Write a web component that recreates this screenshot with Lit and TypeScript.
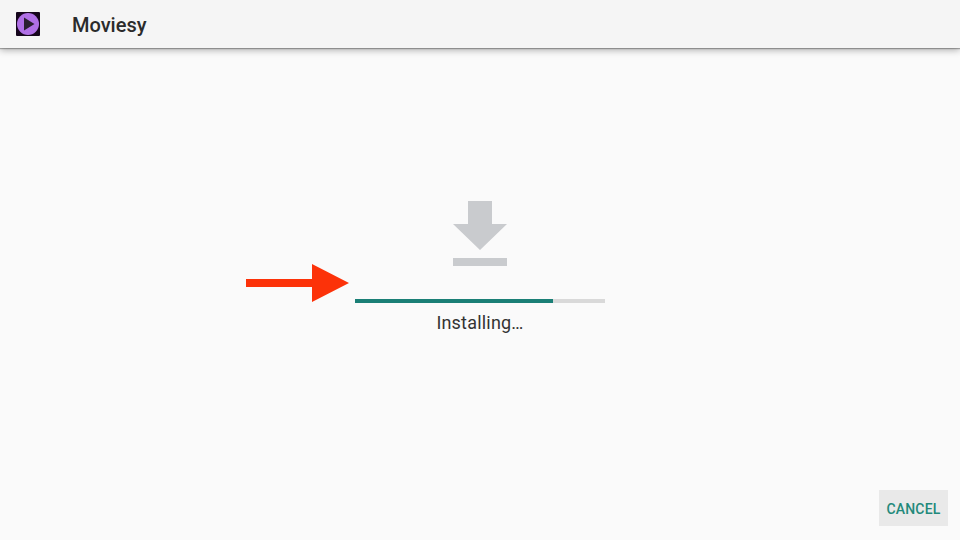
import { LitElement, html, css } from "lit";
import { customElement } from "lit/decorators.js";

@customElement("app-root")
export class AppRoot extends LitElement {
  static styles = css`
    :host {
      display: flex;
      flex-direction: column;
      width: 960px;
      height: 540px;
      background: #fafafa;
      font-family: Roboto, "Liberation Sans", sans-serif;
      overflow: hidden;
    }
    .bar {
      flex: none;
      height: 48px;
      display: flex;
      align-items: center;
      gap: 32px;
      padding-left: 16px;
      background: #f5f5f5;
      box-shadow: 0 1px 1px rgba(0, 0, 0, 0.28), 0 2px 7px rgba(0, 0, 0, 0.32);
      position: relative;
      z-index: 1;
    }
    .logo {
      display: block;
      width: 24px;
      height: 24px;
    }
    .title {
      font-size: 20px;
      font-weight: 500;
      color: #2b2b2b;
      margin-top: 2px;
    }
    .main {
      flex: 1;
      position: relative;
      display: flex;
      flex-direction: column;
      align-items: center;
      padding-top: 153px;
    }
    .dl {
      display: block;
      width: 54px;
      height: 65px;
    }
    .track {
      width: 250px;
      height: 4px;
      margin-top: 33px;
      background: #d9d9d9;
    }
    .fill {
      height: 100%;
      background: #1a7f76;
    }
    .status {
      margin-top: 10px;
      font-size: 18px;
      line-height: 20px;
      color: #333;
      letter-spacing: 0.2px;
    }
    .arrow {
      position: absolute;
      left: 246px;
      top: 216px;
      width: 104px;
      height: 38px;
      display: block;
    }
    .foot {
      flex: none;
      display: flex;
      justify-content: flex-end;
      padding: 0 12px 14px;
    }
    .cancel {
      width: 69px;
      height: 36px;
      border: 0;
      padding: 2px 0 0;
      background: #e9e9e9;
      color: #23897b;
      font-family: inherit;
      font-size: 14px;
      font-weight: 500;
      letter-spacing: 0.2px;
    }
  `;

  render() {
    const progress = 79.2;
    return html`
      <header class="bar">
        <svg class="logo" viewBox="0 0 24 24">
          <rect width="24" height="24" rx="1" fill="#15051c" />
          <circle cx="12" cy="12" r="11" fill="#b070e6" />
          <path d="M8 5.5 L18.5 12 L8 18.5 Z" fill="#2a2030" />
        </svg>
        <span class="title">Moviesy</span>
      </header>
      <main class="main">
        <svg class="dl" viewBox="0 0 54 65">
          <path d="M15 0 H39 V23 H54 L27 49 L0 23 H15 Z" fill="#c9cbce" />
          <rect x="0" y="57" width="54" height="8" fill="#c9cbce" />
        </svg>
        <div class="track"><div class="fill" style="width:${progress}%"></div></div>
        <div class="status">Installing…</div>
        <svg class="arrow" viewBox="0 0 104 38">
          <path d="M0 15 H66 V0 L103 19 L66 38 V23 H0 Z" fill="#fc3209" />
        </svg>
      </main>
      <footer class="foot"><button class="cancel">CANCEL</button></footer>
    `;
  }
}
